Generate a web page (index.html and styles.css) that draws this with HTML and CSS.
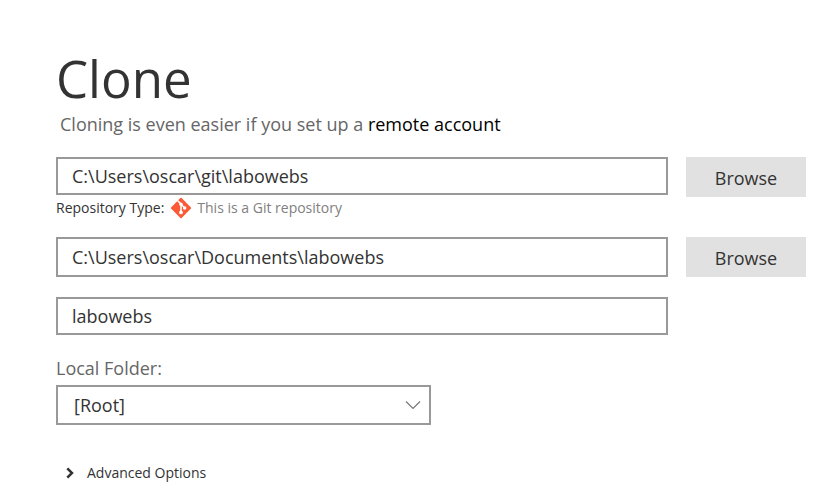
FILE: index.html
```html
<!DOCTYPE html>
<html lang="en">
<head>
  <meta charset="utf-8">
  <meta name="viewport" content="width=device-width, initial-scale=1">
  <title>Clone</title>
  <link rel="stylesheet" href="styles.css">
</head>
<body>
  <main class="clone">
    <h1 class="title">Clone</h1>
    <p class="hint">Cloning is even easier if you set up a <a class="hint-link" href="#">remote account</a></p>
    <form class="form">
      <div class="row">
        <input class="field" type="text" aria-label="Source path" value="C:\Users\oscar\git\labowebs">
        <button class="browse" type="button">Browse</button>
      </div>
      <div class="repo">
        <span>Repository Type:</span>
        <svg class="git" viewBox="0 0 20 20" aria-hidden="true">
          <rect x="3.2" y="3.2" width="13.6" height="13.6" rx="0.8" fill="#fa5a35" transform="rotate(45 10 10)"/>
          <path d="M6.8 3.2 10 6.4V14M10 6.6l3.2 3.2" fill="none" stroke="#fff" stroke-width="1.4"/>
          <circle cx="10" cy="6.6" r="1.6" fill="#fff"/>
          <circle cx="10" cy="14" r="1.7" fill="#fff"/>
          <circle cx="13.3" cy="10" r="1.6" fill="#fff"/>
        </svg>
        <span class="repo-status">This is a Git repository</span>
      </div>
      <div class="row">
        <input class="field field-tall" type="text" aria-label="Destination path" value="C:\Users\oscar\Documents\labowebs">
        <button class="browse" type="button">Browse</button>
      </div>
      <div class="row row-name">
        <input class="field" type="text" aria-label="Name" value="labowebs">
      </div>
      <label class="label" for="folder">Local Folder:</label>
      <div class="select-wrap">
        <select class="select" id="folder">
          <option>[Root]</option>
        </select>
        <svg class="chevron" viewBox="0 0 16 10" aria-hidden="true">
          <path d="M1 1.5 8 8.5 15 1.5" fill="none" stroke="#777" stroke-width="1.2"/>
        </svg>
      </div>
      <button class="advanced" type="button" aria-expanded="false">
        <svg class="arrow" viewBox="0 0 8 12" aria-hidden="true">
          <path d="M1.3 1.3 6 6 1.3 10.7" fill="none" stroke="#333" stroke-width="2.5"/>
        </svg>
        Advanced Options
      </button>
    </form>
  </main>
</body>
</html>
```
FILE: styles.css
```css
* {
  box-sizing: border-box;
}

body {
  margin: 0;
  background: #fff;
  color: #333;
  font-family: "Segoe UI", "Open Sans", "Noto Sans", sans-serif;
  font-size: 18px;
  line-height: 24px;
}

.clone {
  padding: 48px 32px 16px 56px;
}

.title {
  margin: 0 0 4px;
  font-size: 51px;
  font-weight: 400;
  line-height: 60px;
}

.hint {
  margin: 0 0 21px 4px;
  color: #666;
}

.hint-link {
  color: #000;
  text-decoration: none;
}

.row {
  display: grid;
  grid-template-columns: 1fr 120px;
  column-gap: 18px;
  align-items: start;
}

.row-name {
  margin-top: 20px;
}

.field,
.select {
  width: 100%;
  height: 38px;
  margin: 0;
  border: 2px solid #999;
  border-radius: 0;
  background: #fff;
  color: #333;
  font: inherit;
}

.field {
  padding: 0 14px;
}

.field-tall,
.select {
  height: 40px;
}

.browse {
  height: 40px;
  padding: 2px 0 0;
  border: 0;
  background: #e1e1e1;
  color: #333;
  font: inherit;
}

.repo {
  display: flex;
  align-items: center;
  height: 22px;
  margin-bottom: 18px;
  font-size: 14px;
  line-height: 20px;
}

.git {
  width: 22px;
  height: 22px;
  margin: 0 5px 0 6px;
}

.repo-status {
  color: #808080;
}

.label {
  display: block;
  margin: 21px 0 5px;
  color: #666;
}

.select-wrap {
  position: relative;
  width: 50%;
}

.select {
  display: block;
  padding: 0 40px 0 16px;
  appearance: none;
}

.chevron {
  position: absolute;
  top: 15px;
  right: 10px;
  width: 16px;
  height: 10px;
  pointer-events: none;
}

.advanced {
  display: flex;
  align-items: center;
  gap: 13px;
  margin-top: 38px;
  padding: 0 0 0 10px;
  border: 0;
  background: none;
  color: #333;
  font: inherit;
  font-size: 14px;
  line-height: 20px;
}

.arrow {
  width: 8px;
  height: 12px;
}
```
